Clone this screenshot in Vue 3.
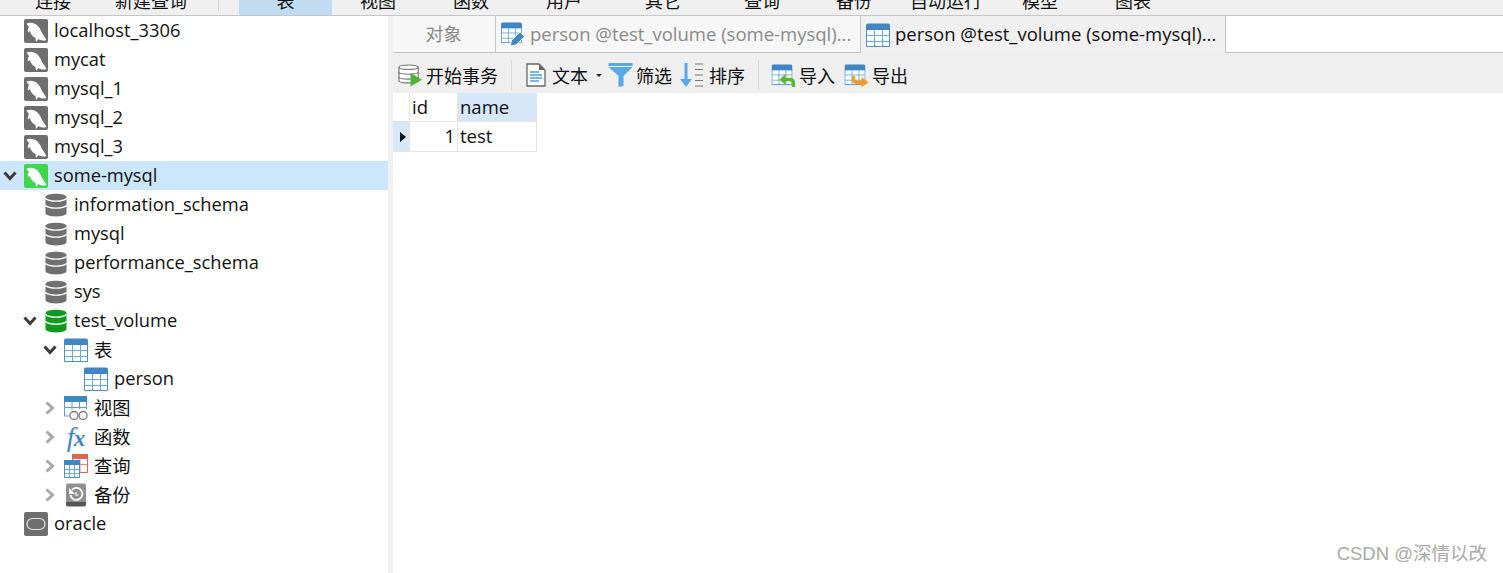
<script setup>
const menus = [
  { t: '连接', w: 94 }, { t: '新建查询', w: 102 }, { sep: true },
  { t: '表', w: 93, active: true }, { t: '视图', w: 92 }, { t: '函数', w: 94 }, { t: '用户', w: 92 },
  { t: '其它', w: 106 }, { t: '查询', w: 92 }, { t: '备份', w: 92 }, { t: '自动运行', w: 92 },
  { t: '模型', w: 96 }, { t: '图表', w: 90 }
]
const tree = [
  { t: 'localhost_3306', icon: 'dolphin', level: 0 },
  { t: 'mycat', icon: 'dolphin', level: 0 },
  { t: 'mysql_1', icon: 'dolphin', level: 0 },
  { t: 'mysql_2', icon: 'dolphin', level: 0 },
  { t: 'mysql_3', icon: 'dolphin', level: 0 },
  { t: 'some-mysql', icon: 'dolphin-on', level: 0, open: true, selected: true },
  { t: 'information_schema', icon: 'db', level: 1 },
  { t: 'mysql', icon: 'db', level: 1 },
  { t: 'performance_schema', icon: 'db', level: 1 },
  { t: 'sys', icon: 'db', level: 1 },
  { t: 'test_volume', icon: 'db-on', level: 1, open: true },
  { t: '表', icon: 'table', level: 2, open: true, cjk: true },
  { t: 'person', icon: 'table', level: 3 },
  { t: '视图', icon: 'view', level: 2, closed: true, cjk: true },
  { t: '函数', icon: 'fx', level: 2, closed: true, cjk: true },
  { t: '查询', icon: 'query', level: 2, closed: true, cjk: true },
  { t: '备份', icon: 'backup', level: 2, closed: true, cjk: true },
  { t: 'oracle', icon: 'oracle', level: 0 }
]
</script>

<template>
  <div class="app">
    <svg class="defs" aria-hidden="true">
      <defs>
        <symbol id="dolphin-shape" viewBox="0 0 24 24">
          <path fill="#fff" d="M2.500 4.500C6 3 10.500 3.500 13.500 6.500C16 9 17 11.500 18 14C19.500 16 21 18.500 22.500 21C19.500 22 16.500 21.500 14.500 20L12 23L11.500 19C8.500 17.500 6.500 15 6 12L4 13.500C3.500 11.500 4 9.500 5 8C4 7 3 5.800 2.500 4.500Z"/>
        </symbol>
        <symbol id="dolphin" viewBox="0 0 24 24">
          <rect width="24" height="24" rx="2" fill="#6e6e6e"/>
          <use href="#dolphin-shape" width="24" height="24"/>
        </symbol>
        <symbol id="dolphin-on" viewBox="0 0 24 24">
          <rect width="24" height="24" rx="2" fill="#3fd64f"/>
          <use href="#dolphin-shape" width="24" height="24"/>
        </symbol>
        <symbol id="oracle" viewBox="0 0 24 24">
          <rect width="24" height="24" rx="2" fill="#6e6e6e"/>
          <rect x="3" y="6.500" width="18" height="11" rx="5.500" fill="none" stroke="#e4e4e4" stroke-width="1.200"/>
        </symbol>
        <symbol id="db" viewBox="0 0 24 24">
          <path fill="#6f6f6f" d="M1.500 4C1.500 -.5 22.500 -.5 22.500 4V20C22.500 24.500 1.500 24.500 1.500 20Z"/>
          <path fill="none" stroke="#fff" stroke-width="1.300" d="M1.500 5.500C5 9 19 9 22.500 5.500M1.500 12.500C5 16 19 16 22.500 12.500"/>
        </symbol>
        <symbol id="db-on" viewBox="0 0 24 24">
          <path fill="#0f9a1e" d="M1.500 4C1.500 -.5 22.500 -.5 22.500 4V20C22.500 24.500 1.500 24.500 1.500 20Z"/>
          <path fill="none" stroke="#fff" stroke-width="1.300" d="M1.500 5.500C5 9 19 9 22.500 5.500M1.500 12.500C5 16 19 16 22.500 12.500"/>
        </symbol>
        <symbol id="table" viewBox="0 0 24 24">
          <path fill="#fff" stroke="#4a90c9" d="M.5 6.500h23v17H.5z"/>
          <path fill="#3f86c2" d="M0 2.500Q0 .5 2 .5H22Q24 .5 24 2.500V7H0Z"/>
          <path fill="none" stroke="#6aa8da" d="M8.500 7v16M16.500 7v16M1 12.500h22M1 18.500h22"/>
        </symbol>
        <symbol id="view" viewBox="0 0 24 24">
          <path fill="#3f86c2" d="M0 0h23v6H0z"/>
          <path fill="none" stroke="#5a9fd6" d="M.5 6v14h5M22.500 6v7M8 6v8M15.500 6v7M.5 11.500h22"/>
          <circle cx="10" cy="19.500" r="4" fill="#fff" stroke="#777" stroke-width="1.300"/>
          <circle cx="19" cy="19.500" r="4" fill="#fff" stroke="#777" stroke-width="1.300"/>
        </symbol>
        <symbol id="query" viewBox="0 0 24 24">
          <path fill="#fff" stroke="#d9694a" d="M8.500 1.500h15v17h-15z"/>
          <path fill="#d9694a" d="M8 0h16v5H8z"/>
          <path fill="none" stroke="#e08c73" d="M16 5v13M9 10.500h14"/>
          <path fill="#fff" stroke="#4a90c9" d="M.5 7.500h15v16H.5z"/>
          <path fill="#3f86c2" d="M0 6h16v5H0z"/>
          <path fill="none" stroke="#6aa8da" d="M5.500 11v12M10.500 11v12M1 15.500h14M1 19.500h14"/>
        </symbol>
        <symbol id="backup" viewBox="0 0 24 24">
          <path fill="#909090" d="M2 2.500Q2 .5 4 .5H20Q22 .5 22 2.500V20H2Z"/>
          <path fill="#555" d="M2 19H22V21.500Q22 23.500 20 23.500H4Q2 23.500 2 21.500Z"/>
          <path fill="none" stroke="#fff" stroke-width="1.800" d="M8 6.800A6 6 0 1 1 6.500 12"/>
          <path fill="#fff" d="M5 5V11H11Z"/>
          <path fill="none" stroke="#fff" stroke-width="1.200" d="M12 9V12H14.500"/>
        </symbol>
      </defs>
    </svg>

    <nav class="menu">
      <template v-for="m in menus" :key="m.t || 'sep'">
        <span v-if="m.sep" class="menu-sep"></span>
        <span v-else class="menu-item" :class="{ active: m.active }" :style="{ width: m.w + 'px' }"><span class="menu-text">{{ m.t }}</span></span>
      </template>
    </nav>

    <div class="body">
      <aside class="tree">
        <div v-for="n in tree" :key="n.t + n.level" class="row" :class="['lv' + n.level, { selected: n.selected }]">
          <svg v-if="n.open" class="arrow" viewBox="0 0 14 10"><path d="M1.500 1.500L7 7.500L12.500 1.500" fill="none" stroke="#3c3c3c" stroke-width="3"/></svg>
          <svg v-else-if="n.closed" class="arrow closed" viewBox="0 0 10 14"><path d="M1.500 1.500L7.500 7L1.500 12.500" fill="none" stroke="#a8a8a8" stroke-width="3"/></svg>
          <span v-else class="arrow none"></span>
          <span v-if="n.icon === 'fx'" class="fx"><i class="fx-f">f</i><i class="fx-x">x</i></span>
          <svg v-else class="ico"><use :href="'#' + n.icon" width="24" height="24"/></svg>
          <span class="label" :class="{ latin: !n.cjk }">{{ n.t }}</span>
        </div>
      </aside>

      <main class="main">
        <div class="tabs">
          <div class="tab objects">对象</div>
          <div class="tab">
            <svg class="tab-ico" viewBox="0 0 24 24">
              <use href="#table" width="21" height="21"/>
              <path fill="#3f86c2" stroke="#fff" d="M9 24L10.500 18.500L19 10L23.500 14.500L15 23Z"/>
            </svg>
            <span class="tab-text">person @test_volume (some-mysql)...</span>
          </div>
          <div class="tab current">
            <svg class="tab-ico"><use href="#table" width="24" height="24"/></svg>
            <span class="tab-text">person @test_volume (some-mysql)...</span>
          </div>
          <div class="tab-rest"></div>
        </div>

        <div class="toolbar">
          <button class="tool t-begin">
            <svg class="tool-ico" viewBox="0 0 26 24">
              <g fill="#fff" stroke="#777" stroke-width="1.200"><path d="M1 4C1 .8 21 .8 21 4V18C21 21 1 21 1 18Z"/><path fill="none" d="M1 4C1 7 21 7 21 4M1 9C1 12 21 12 21 9M1 14C1 17 21 17 21 14"/></g>
              <path fill="#52b435" d="M13 10L25 17L13 24Z"/>
            </svg>
            开始事务
          </button>
          <span class="tool-sep s1"></span>
          <button class="tool t-text">
            <svg class="tool-ico doc" viewBox="0 0 20 24">
              <path fill="#fff" stroke="#666" stroke-width="1.300" d="M1 1H13L19 7V23H1Z"/>
              <path fill="#666" d="M13 1L19 7H13Z"/>
              <path stroke="#4f9de0" stroke-width="1.300" d="M4 9h9M4 12h12M4 15h12M4 18h9"/>
            </svg>
            文本
            <span class="caret"></span>
          </button>
          <button class="tool t-filter">
            <svg class="tool-ico" viewBox="0 0 24 24"><path fill="#5aa9e6" d="M0 0H24V3H0ZM0 4H24L15 13V23L10 24V13Z"/></svg>
            筛选
          </button>
          <button class="tool t-sort">
            <svg class="tool-ico sort" viewBox="0 0 25 24">
              <path fill="#5aa9e6" d="M4.500 0H7.500V16H12L6 24L0 16H4.500Z"/>
              <path stroke="#777" stroke-width="1.200" d="M15 1h8M15 6.500h8M15 12h8M15 17.500h8M15 23h8"/>
            </svg>
            排序
          </button>
          <span class="tool-sep s2"></span>
          <button class="tool t-import">
            <svg class="tool-ico" viewBox="0 0 24 24">
              <use href="#table" width="21" height="23"/>
              <path fill="none" stroke="#5ab72e" stroke-width="3.400" d="M22 24V20Q22 16.500 18 16.500H12"/>
              <path fill="#5ab72e" d="M14 11V22L8 16.500Z"/>
            </svg>
            导入
          </button>
          <button class="tool t-export">
            <svg class="tool-ico" viewBox="0 0 24 24">
              <use href="#table" width="21" height="23"/>
              <path fill="none" stroke="#f59a1f" stroke-width="3.400" d="M9 13V16Q9 19.500 13 19.500H18"/>
              <path fill="#f59a1f" d="M17 14V24L24 19.500Z"/>
            </svg>
            导出
          </button>
        </div>

        <div class="grid">
          <div class="cell marker"></div>
          <div class="cell head">id</div>
          <div class="cell head name">name</div>
          <div class="cell marker sel"><span class="pointer"></span></div>
          <div class="cell num">1</div>
          <div class="cell">test</div>
        </div>
      </main>
    </div>

    <div class="watermark">CSDN @深情以改</div>
  </div>
</template>

<style scoped>
.app {
  position: relative;
  width: 1503px;
  height: 573px;
  overflow: hidden;
  background: #fff;
  font-family: "Open Sans", "Noto Sans CJK SC", sans-serif;
  font-size: 18.300px;
  color: #111;
}
.defs { position: absolute; width: 0; height: 0; }

.menu {
  display: flex;
  height: 15px;
  padding-left: 6px;
  background: #f0f0f0;
  border-bottom: 1px solid #c6c6c6;
  overflow: hidden;
}
.menu-item {
  display: block;
  height: 15px;
  text-align: center;
  overflow: hidden;
}
.menu-text { display: block; margin-top: -12px; line-height: 24px; font-size: 18px; font-family: "Noto Sans CJK SC", sans-serif; }
.menu-item.active { background: #bfdcf3; border-bottom: 2px solid #a9cdea; }
.menu-sep { width: 1px; height: 12px; margin: 0 20px 0 16px; background: #d4d4d4; }

.body { display: flex; height: 557px; }

.tree { width: 388px; flex: none; background: #fff; }
.row { display: flex; align-items: center; height: 29px; }
.row.selected { background: #cce6fc; }
.arrow { flex: none; width: 14px; height: 10px; margin-left: 3px; }
.arrow.closed { width: 10px; height: 14px; margin-left: 5px; margin-right: 2px; }
.arrow.none { height: 1px; }
.lv0 { padding-left: 0; }
.lv1 { padding-left: 20px; }
.lv2 { padding-left: 40px; }
.lv3 { padding-left: 60px; }
.ico { flex: none; width: 24px; height: 24px; margin-left: 7px; }
.label { margin-left: 6px; white-space: nowrap; line-height: 29px; }
.label.latin { margin-top: -2px; }
.fx { flex: none; display: flex; align-items: baseline; justify-content: center; width: 24px; height: 24px; margin-left: 7px; font-family: "Liberation Serif", serif; line-height: 24px; color: #3f86c2; white-space: nowrap; }
.fx-f { font-size: 28px; font-style: italic; font-weight: 400; }
.fx-x { font-size: 23px; font-style: italic; font-weight: 700; margin-left: -1px; }

.main { flex: 1; margin-left: 0; border-left: 5px solid #f0f0f0; min-width: 0; }

.tabs { display: flex; height: 37px; border-bottom: 1px solid #c6c6c6; box-sizing: border-box; }
.tab {
  display: flex;
  align-items: center;
  flex: none;
  width: 365px;
  height: 36px;
  box-sizing: border-box;
  padding-left: 5px;
  background: #f7f7f7;
  border-right: 1px solid #c6c6c6;
  color: #8a8a8a;
  white-space: nowrap;
}
.tab.objects { width: 103px; padding: 0 1px 2px 0; justify-content: center; font-family: "Noto Sans CJK SC", sans-serif; font-size: 18px; }
.tab.current { background: #f0f0f0; color: #111; height: 37px; position: relative; }
.tab-ico { flex: none; width: 24px; height: 24px; margin-right: 5px; }
.tab-text { font-size: 18.500px; margin-top: -2px; }
.tab-rest { flex: 1; background: #fff; }

.toolbar { display: flex; align-items: center; box-sizing: border-box; height: 40px; background: #efefef; padding: 4px 0 0 5px; }
.tool {
  display: flex;
  align-items: center;
  flex: none;
  height: 36px;
  padding: 0;
  border: 0;
  background: none;
  font: 18px "Noto Sans CJK SC", sans-serif;
  color: #111;
  white-space: nowrap;
}
.tool-ico { flex: none; width: 25px; height: 24px; margin-right: 3px; }
.tool-ico.doc { width: 20px; margin-right: 6px; }
.tool-ico.sort { margin-right: 4px; }
.tool-sep { flex: none; width: 1px; height: 30px; background: #d8d8d8; }
.s1 { margin: 0 14px 0 13px; }
.s2 { margin: 0 12px 0 13px; }
.t-filter { margin-left: 0; }
.t-sort { margin-left: 8px; }
.t-export { margin-left: 9px; }
.caret { width: 0; height: 0; margin: 0 6px 0 8px; border: 3px solid transparent; border-top: 3px solid #222; border-bottom: 0; }

.grid { display: grid; grid-template-columns: 17px 48px 79px; grid-template-rows: 29px 30px; width: 144px; font-size: 18.500px; }
.cell {
  box-sizing: border-box;
  padding-left: 2px;
  line-height: 28px;
  border-right: 1px solid #e4e4e4;
  border-bottom: 1px solid #e4e4e4;
  overflow: hidden;
}
.head { background: #fff; }
.head.name { background: #d6e8f8; }
.marker { padding: 0 0 0 3px; display: flex; align-items: center; justify-content: center; }
.marker.sel { background: #d6e8f8; }
.num { text-align: right; padding-right: 2px; }
.pointer { width: 0; height: 0; border: 5.500px solid transparent; border-left: 6px solid #111; border-right: 0; }

.watermark {
  position: absolute;
  right: 16px;
  bottom: 8px;
  font: 18.500px "Liberation Sans", "Noto Sans CJK SC", sans-serif;
  color: #a9a9a9;
  white-space: nowrap;
}
</style>
